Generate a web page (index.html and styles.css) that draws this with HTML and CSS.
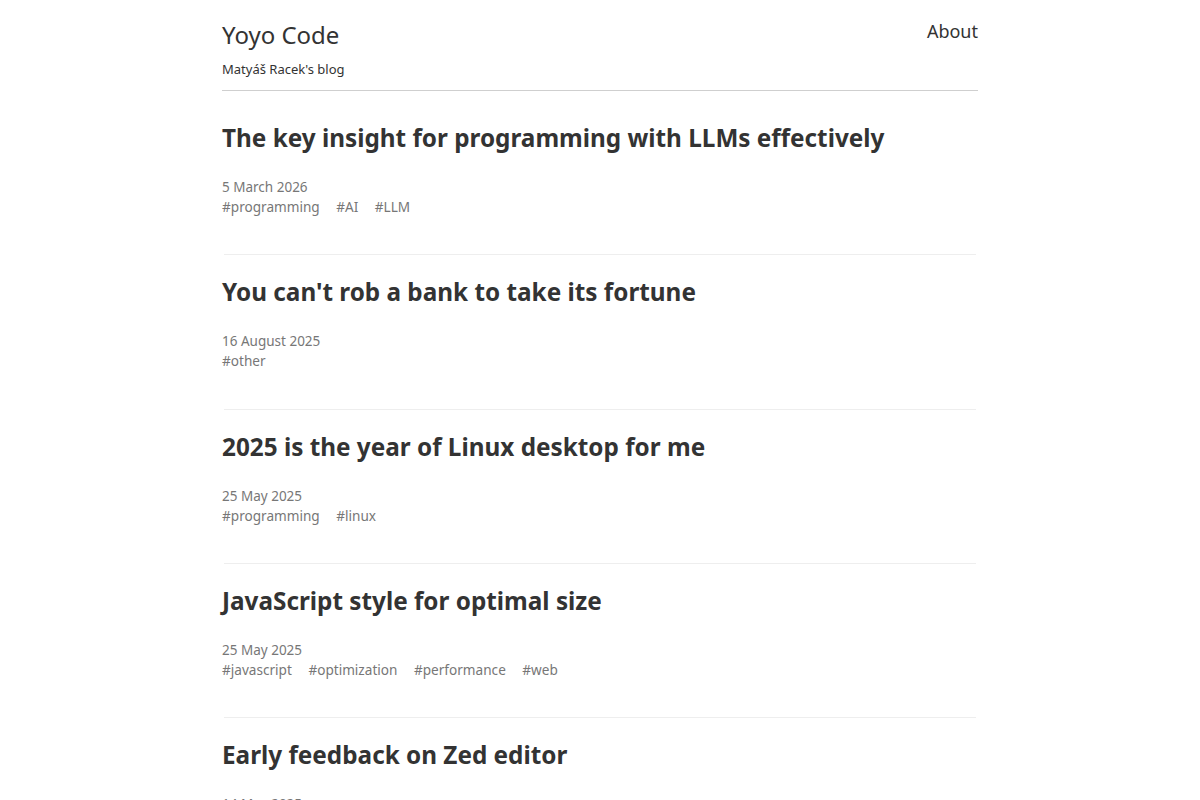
FILE: index.html
```html
<!DOCTYPE html>
<html lang="en">
<head>
<meta charset="utf-8">
<title>Yoyo Code</title>
<link rel="stylesheet" href="styles.css">
</head>
<body>
<div class="page">
  <header class="site-header">
    <div class="brand">
      <a class="site-title" href="#">Yoyo Code</a>
      <div class="site-subtitle">Matyáš Racek's blog</div>
    </div>
    <nav class="site-nav"><a href="#">About</a></nav>
  </header>
  <main class="posts">
    <article class="post">
      <h2 class="post-title"><a href="#">The key insight for programming with LLMs effectively</a></h2>
      <div class="post-date">5 March 2026</div>
      <div class="post-tags"><a href="#">#programming</a><a href="#">#AI</a><a href="#">#LLM</a></div>
    </article>
    <article class="post">
      <h2 class="post-title"><a href="#">You can't rob a bank to take its fortune</a></h2>
      <div class="post-date">16 August 2025</div>
      <div class="post-tags"><a href="#">#other</a></div>
    </article>
    <article class="post">
      <h2 class="post-title"><a href="#">2025 is the year of Linux desktop for me</a></h2>
      <div class="post-date">25 May 2025</div>
      <div class="post-tags"><a href="#">#programming</a><a href="#">#linux</a></div>
    </article>
    <article class="post">
      <h2 class="post-title"><a href="#">JavaScript style for optimal size</a></h2>
      <div class="post-date">25 May 2025</div>
      <div class="post-tags"><a href="#">#javascript</a><a href="#">#optimization</a><a href="#">#performance</a><a href="#">#web</a></div>
    </article>
    <article class="post">
      <h2 class="post-title"><a href="#">Early feedback on Zed editor</a></h2>
      <div class="post-date">14 May 2025</div>
      <div class="post-tags"><a href="#">#programming</a><a href="#">#editor</a></div>
    </article>
  </main>
</div>
</body>
</html>
```
FILE: styles.css
```css
html, body {
  margin: 0;
  padding: 0;
  background: #fff;
}
body {
  font-family: "Noto Sans", "Open Sans", sans-serif;
  color: #333;
}
a {
  color: inherit;
  text-decoration: none;
}
.page {
  width: 756px;
  margin: 0 auto;
}
.site-header {
  display: flex;
  justify-content: space-between;
  align-items: flex-start;
  padding-top: 18px;
  padding-bottom: 12px;
  border-bottom: 1px solid #cfcfcf;
}
.site-title {
  display: block;
  font-size: 24px;
  line-height: 34px;
  color: #333;
}
.site-subtitle {
  font-size: 13px;
  line-height: 18px;
  margin-top: 8px;
  color: #333;
}
.site-nav {
  font-size: 18px;
  line-height: 26px;
  color: #333;
}
.posts {
  padding-top: 10px;
}
.post {
  padding: 21px 0 37.3px;
  border-bottom: 1px solid #eee;
  margin: 0 2px;
}
.post-title {
  margin: 0 -2px;
  font-size: 24.3px;
  line-height: 31px;
  font-weight: 700;
  color: #333;
}
.post-date {
  margin: 24px -2px 0;
  font-size: 13.5px;
  line-height: 20px;
  color: #777;
}
.post-tags {
  margin: 0 -2px;
  display: flex;
  gap: 16.5px;
  font-size: 13.6px;
  line-height: 20px;
  color: #777;
}
```
